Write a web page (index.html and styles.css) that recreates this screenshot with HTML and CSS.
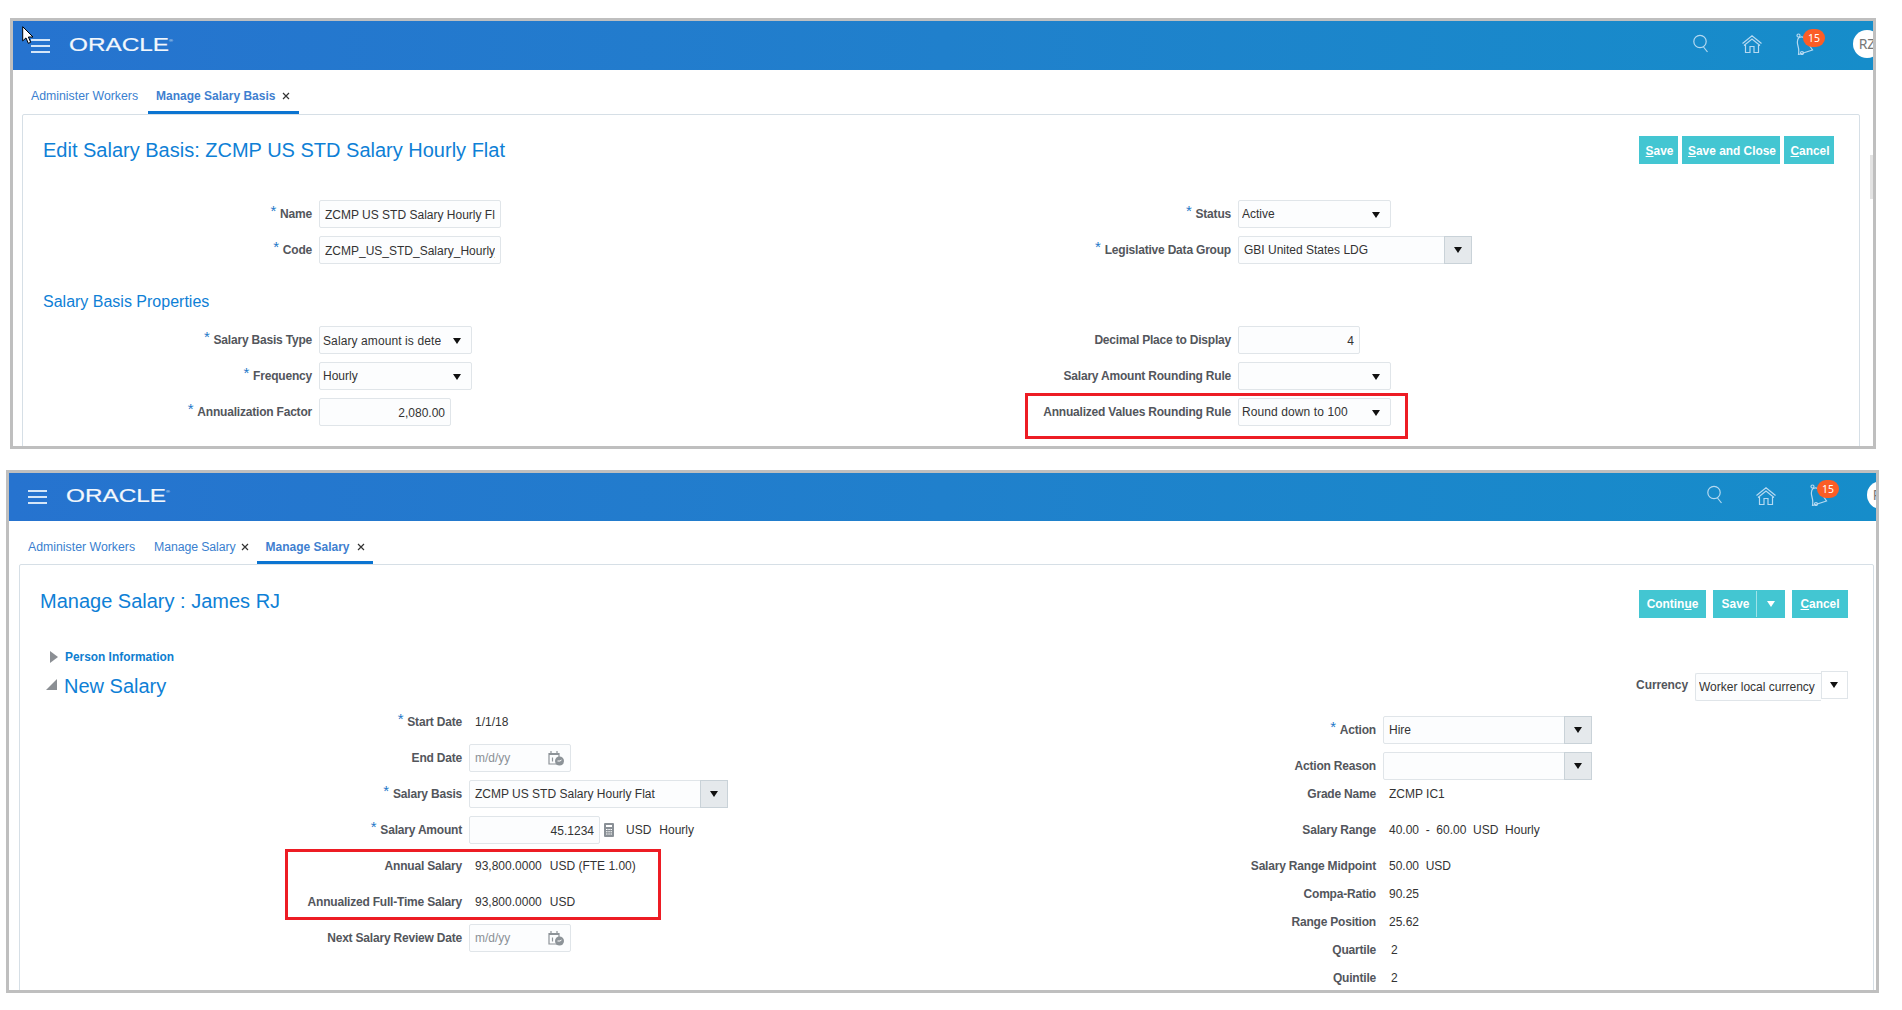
FILE: index.html
```html
<!DOCTYPE html>
<html lang="en">
<head>
<meta charset="utf-8">
<title>Salary screens</title>
<link rel="stylesheet" href="styles.css">
</head>
<body>
<svg class="defs" width="0" height="0" aria-hidden="true">
  <symbol id="i-search" viewBox="0 0 16 20"><circle cx="7" cy="7.500" r="6.200"/><path d="M10.500 13l4 5"/></symbol>
  <symbol id="i-home" viewBox="0 0 20 18"><path d="M.5 8.500L10 .8l9.500 7.700M2 10.500L10 4l8 6.500M3.500 10v7.500h4.500v-6h4v6h4.500V10"/></symbol>
  <symbol id="i-bell" viewBox="0 0 20 22"><path d="M4 4.500c3-1.500 5-.5 6.500 1.500l5 8 2 3-14 4.500c.5-3 .5-5-.5-8.500S1.500 7 4 4.500z"/><circle cx="3.500" cy="2.500" r="1.500"/><circle cx="7" cy="20" r="1.500"/></symbol>
  <symbol id="i-cal" viewBox="0 0 16 16"><path class="cal-line" d="M1 3.500h10v10.500H1zM1 4.500h10M3 1v3M9 1v3M4.500 7.500v4"/><circle class="cal-fill" cx="11.500" cy="11" r="4.500"/><path class="cal-hand" d="M9.500 11h2.500l1.500-1"/></symbol>
  <symbol id="i-x" viewBox="0 0 8 8"><path d="M1 1l6 6M7 1L1 7"/></symbol>
</svg>
<main class="page">

  <section class="window window-a">
    <svg class="cursor" viewBox="0 0 12 18" width="12" height="18"><path d="M.7.7v14.200l3.300-3 2.300 5.400 2.400-1-2.300-5.300h4.600z"/></svg>
    <span class="scroll-thumb"></span>
    <header class="bar">
      <span class="burger"><i></i><i></i><i></i></span>
      <span class="logo"><span class="logo-word">ORACLE<sup>®</sup></span></span>
      <div class="tools">
        <svg class="tool t-search"><use href="#i-search"/></svg>
        <svg class="tool t-home"><use href="#i-home"/></svg>
        <span class="bell"><svg class="tool t-bell"><use href="#i-bell"/></svg><b class="badge">15</b></span>
        <span class="avatar">RZ</span>
      </div>
    </header>
    <nav class="tabs">
      <span class="tab">Administer Workers</span>
      <span class="tab tab-active">Manage Salary Basis<svg class="x"><use href="#i-x"/></svg></span>
    </nav>
    <div class="panel">
      <div class="head">
        <h1 class="title">Edit Salary Basis: ZCMP US STD Salary Hourly Flat</h1>
        <div class="actions">
          <button class="btn w-save"><u>S</u>ave</button>
          <button class="btn w-close"><u>S</u>ave and Close</button>
          <button class="btn w-cancel"><u>C</u>ancel</button>
        </div>
      </div>
      <div class="cols cols-a">
        <div>
          <div class="row"><label class="lbl"><em>*</em>Name</label><div class="inp w182"><input class="field field-long" value="ZCMP US STD Salary Hourly Flat"></div></div>
          <div class="row"><label class="lbl"><em>*</em>Code</label><div class="inp w182"><input class="field field-long" value="ZCMP_US_STD_Salary_Hourly_Flat"></div></div>
        </div>
        <div>
          <div class="row"><label class="lbl"><em>*</em>Status</label><div class="sel w153"><span class="clip">Active</span><i class="tri"></i></div></div>
          <div class="row"><label class="lbl"><em>*</em>Legislative Data Group</label><div class="combo w234"><span class="clip">GBI United States LDG</span><span class="combo-btn"><i class="tri"></i></span></div></div>
        </div>
      </div>
      <h2 class="section">Salary Basis Properties</h2>
      <div class="cols cols-a">
        <div>
          <div class="row"><label class="lbl"><em>*</em>Salary Basis Type</label><div class="sel w153"><input class="field field-sel spaced" value="Salary amount is determined"><i class="tri"></i></div></div>
          <div class="row"><label class="lbl"><em>*</em>Frequency</label><div class="sel w153"><span class="clip">Hourly</span><i class="tri"></i></div></div>
          <div class="row"><label class="lbl"><em>*</em>Annualization Factor</label><div class="inp num w132">2,080.00</div></div>
        </div>
        <div>
          <div class="row"><label class="lbl">Decimal Place to Display</label><div class="inp num w122">4</div></div>
          <div class="row"><label class="lbl">Salary Amount Rounding Rule</label><div class="sel w153"><i class="tri"></i></div></div>
          <div class="row mark-host"><span class="mark mark-a"></span><label class="lbl">Annualized Values Rounding Rule</label><div class="sel w153"><span class="clip spaced">Round down to 100</span><i class="tri"></i></div></div>
        </div>
      </div>
    </div>
  </section>

  <section class="window window-b">
    <header class="bar">
      <span class="burger"><i></i><i></i><i></i></span>
      <span class="logo"><span class="logo-word">ORACLE<sup>®</sup></span></span>
      <div class="tools">
        <svg class="tool t-search"><use href="#i-search"/></svg>
        <svg class="tool t-home"><use href="#i-home"/></svg>
        <span class="bell"><svg class="tool t-bell"><use href="#i-bell"/></svg><b class="badge">15</b></span>
        <span class="avatar">RZ</span>
      </div>
    </header>
    <nav class="tabs">
      <span class="tab">Administer Workers</span>
      <span class="tab tab-plain">Manage Salary<svg class="x"><use href="#i-x"/></svg></span>
      <span class="tab tab-active">Manage Salary<svg class="x"><use href="#i-x"/></svg></span>
    </nav>
    <div class="panel">
      <div class="head">
        <h1 class="title">Manage Salary : James RJ</h1>
        <div class="actions">
          <button class="btn w-cont">Contin<u>u</u>e</button>
          <button class="btn w-split"><span class="split-l">Save</span><span class="split-r"><i class="tri tri-w"></i></span></button>
          <button class="btn w-cancel2"><u>C</u>ancel</button>
        </div>
      </div>
      <div class="disclose"><i class="tw-right"></i><a class="person">Person Information</a></div>
      <div class="subhead">
        <i class="tw-down"></i><h2 class="new">New Salary</h2>
        <div class="currency"><label class="lbl-plain">Currency</label><div class="cur-sel"><span class="clip">Worker local currency</span></div><span class="cur-btn"><i class="tri"></i></span></div>
      </div>
      <div class="cols cols-b">
        <div>
          <div class="row"><label class="lbl"><em>*</em>Start Date</label><span class="val">1/1/18</span></div>
          <div class="row"><label class="lbl">End Date</label><div class="inp date w102"><span class="ph">m/d/yy</span><svg class="cal"><use href="#i-cal"/></svg></div></div>
          <div class="row"><label class="lbl"><em>*</em>Salary Basis</label><div class="combo w259"><span class="clip">ZCMP US STD Salary Hourly Flat</span><span class="combo-btn"><i class="tri"></i></span></div></div>
          <div class="row"><label class="lbl"><em>*</em>Salary Amount</label><div class="inp num w131">45.1234</div>
            <svg class="calc" viewBox="0 0 10 14" width="10" height="14"><rect width="10" height="14" rx="1"/><path d="M2 2h6v2H2zM2 6h1.500v1H2zM4.300 6h1.500v1H4.300zM6.500 6H8v1H6.500zM2 8.200h1.500v1H2zM4.300 8.200h1.500v1H4.300zM6.500 8.200H8v1H6.500zM2 10.500h1.500v1H2zM4.300 10.500h1.500v1H4.300zM6.500 10.500H8v1H6.500z"/></svg>
            <span class="val val-unit">USD</span><span class="val val-hourly">Hourly</span></div>
          <div class="mark-group">
            <span class="mark mark-b"></span>
            <div class="row"><label class="lbl">Annual Salary</label><span class="val">93,800.0000</span><span class="val val-usd">USD (FTE 1.00)</span></div>
            <div class="row"><label class="lbl">Annualized Full-Time Salary</label><span class="val">93,800.0000</span><span class="val val-usd">USD</span></div>
          </div>
          <div class="row"><label class="lbl">Next Salary Review Date</label><div class="inp date w102"><span class="ph">m/d/yy</span><svg class="cal"><use href="#i-cal"/></svg></div></div>
        </div>
        <div class="col-right">
          <div class="row"><label class="lbl"><em>*</em>Action</label><div class="combo w209"><span class="clip">Hire</span><span class="combo-btn"><i class="tri"></i></span></div></div>
          <div class="row tight"><label class="lbl">Action Reason</label><div class="combo w209"><span class="clip"></span><span class="combo-btn"><i class="tri"></i></span></div></div>
          <div class="row"><label class="lbl">Grade Name</label><span class="val">ZCMP IC1</span></div>
          <div class="row"><label class="lbl">Salary Range</label><span class="val">40.00&nbsp; - &nbsp;60.00&nbsp; USD&nbsp; Hourly</span></div>
          <div class="row tight"><label class="lbl">Salary Range Midpoint</label><span class="val">50.00&nbsp; USD</span></div>
          <div class="row tight"><label class="lbl">Compa-Ratio</label><span class="val">90.25</span></div>
          <div class="row tight"><label class="lbl">Range Position</label><span class="val">25.62</span></div>
          <div class="row tight"><label class="lbl">Quartile</label><span class="val val-n">2</span></div>
          <div class="row tight"><label class="lbl">Quintile</label><span class="val val-n">2</span></div>
        </div>
      </div>
    </div>
  </section>
</main>
</body>
</html>
```
FILE: styles.css
```css
* { box-sizing: border-box; }
html, body { margin: 0; padding: 0; background: #fff; }
body { font-family: "Liberation Sans", Arial, sans-serif; font-size: 12px; color: #333; overflow: hidden; height: 1010px; }
.defs { position: absolute; }
.page { padding-top: 18px; }

.window { position: relative; border: 3px solid #bfbfbf; background: #fff; overflow: hidden; }
.window-a { margin-left: 10px; width: 1866px; height: 431px; }
.window-b { margin-left: 6px; margin-top: 21px; width: 1873px; height: 523px; }

.cursor { position: absolute; left: 9px; top: 5px; z-index: 5; }
.cursor path { fill: #fff; stroke: #000; stroke-width: 1; }
.scroll-thumb { position: absolute; right: 0; top: 134px; width: 3px; height: 44px; background: #e3e3e3; z-index: 3; }

.bar { display: flex; align-items: center; background: linear-gradient(90deg, #2673cf 0%, #2080cc 50%, #168dca 100%); }
.window-a .bar { height: 49px; padding-left: 18px; }
.window-b .bar { height: 48px; padding-left: 19px; }
.burger { display: flex; flex-direction: column; gap: 4px; width: 19px; margin-right: 19px; }
.burger i { display: block; height: 2px; background: #d5e6f8; }
.logo { display: block; width: 104px; height: 20px; margin-top: -2px; color: #f2f7fc; }
.logo-word { display: inline-block; font-size: 19px; line-height: 20px; -webkit-text-stroke: 0.2px #f2f7fc; transform: scaleX(1.28); transform-origin: left center; white-space: nowrap; }
.logo sup { font-size: 4px; vertical-align: 9px; line-height: 0; -webkit-text-stroke: 0; }

.tools { margin-left: auto; display: flex; align-items: center; }
.tool { display: block; fill: none; stroke: #b5d9f1; stroke-width: 1.200; }
.t-search { width: 16px; height: 20px; }
.t-home { width: 20px; height: 18px; margin-left: 33px; margin-top: 1px; }
.bell { position: relative; display: block; width: 20px; height: 22px; margin-left: 33px; }
.t-bell { width: 20px; height: 22px; }
.badge { position: absolute; left: 8px; top: -4px; width: 22px; height: 18px; border-radius: 9px; background: #fb5d26; color: #fff; font: 400 10.500px/18px "Noto Sans", sans-serif; text-align: center; }
.avatar { display: block; flex: none; width: 28px; height: 28px; border-radius: 50%; background: #fff; color: #777; font: 14px/28px "Noto Sans", sans-serif; text-align: center; margin-left: 38px; }
.window-a .tools { margin-right: -8px; margin-top: -4px; }
.window-b .tools { margin-right: -19px; margin-top: -4px; }

.tabs { display: flex; align-items: flex-end; font-size: 12.300px; color: #3a7fcf; }
.window-a .tabs { height: 44px; padding-left: 18px; }
.window-b .tabs { height: 43px; padding-left: 19px; }
.tab { display: flex; align-items: center; height: 32px; padding-bottom: 3px; white-space: nowrap; }
.window-a .tab { padding-bottom: 5px; }
.tab-plain { margin-left: 19px; letter-spacing: -0.1px; }
.tab-plain .x { margin-left: 6px; }
.tab-active { padding: 0 9px; border-bottom: 3px solid #0b74d1; font-size: 12px; font-weight: 700; color: #3f7fd0; }
.window-a .tab-active { margin-left: 10px; padding: 0 9px 2px 8px; }
.window-b .tab-active { margin-left: 8px; padding: 0 8px; }
.x { width: 8px; height: 8px; margin-left: 7px; fill: none; stroke: #333; stroke-width: 1.200; }

.panel { border: 1px solid #d6dfe6; border-radius: 2px; height: 600px; }
.window-a .panel { margin: 0 13px 0 9px; }
.window-b .panel { margin: 0 2px 0 10px; }
.head { display: flex; align-items: center; justify-content: space-between; height: 28px; }
.window-a .head { margin-top: 21px; padding: 0 25px 0 20px; }
.window-b .head { margin-top: 25px; padding: 0 25px 0 20px; }
.title { margin: 0; font-size: 20px; font-weight: 400; color: #0e80d6; white-space: nowrap; }
.window-b .title { margin-bottom: 5px; }
.actions { display: flex; }
.btn { display: block; height: 28px; border: 0; padding: 0; background: #43c6d2; color: #fff; font: 700 11.900px "Liberation Sans", Arial, sans-serif; }
.window-a .btn { padding: 2px 0 0 2px; }
.w-save { width: 39px; margin-right: 4px; }
.w-close { width: 98px; margin-right: 4px; }
.w-cancel { width: 50px; }
.w-cont { width: 67px; margin-right: 7px; }
.w-split { width: 72px; margin-right: 7px; display: flex; align-items: stretch; }
.split-l { width: 44px; line-height: 26px; padding-left: 2px; border-right: 1px solid #9fe3e9; margin: 1px 0; }
.split-r { flex: 1; display: flex; align-items: center; justify-content: center; }
.w-cancel2 { width: 56px; }

.cols { display: grid; align-items: start; }
.cols-a { grid-template-columns: 723px 1fr; }
.cols-b { grid-template-columns: 801px 1fr; margin-top: 7px; }
.cols-a > div:first-child .lbl { width: 289px; }
.cols-a > div:last-child .lbl { width: 485px; }
.cols-b > div:first-child .lbl { width: 442px; }
.cols-b > div:last-child .lbl { width: 555px; }
.window-a .head + .cols { margin-top: 36px; }

.row { position: relative; display: flex; align-items: center; height: 28px; margin-bottom: 8px; }
.row.tight { margin-bottom: 0; }
.col-right { padding-top: 8px; }
.lbl { flex: none; margin-right: 7px; padding-bottom: 1px; text-align: right; font-size: 12px; letter-spacing: -0.2px; font-weight: 700; color: #53565c; white-space: nowrap; }
.lbl em { font-style: normal; font-size: 15px; line-height: 0; color: #2478c8; font-weight: 400; margin-right: 4px; position: relative; top: -2px; }
.inp, .sel, .combo { position: relative; flex: none; height: 28px; line-height: 26px; background: #fcfdfe; border: 1px solid #e0e5e9; border-radius: 2px; color: #333; white-space: nowrap; }
.inp { padding: 0 5px; }
.sel { padding-left: 3px; }
.clip { display: block; overflow: hidden; white-space: nowrap; }
.spaced { letter-spacing: 0.1px; }
.field { display: block; height: 26px; padding: 1px 0 0; border: 0; outline: 0; background: transparent; color: #333; font: inherit; }
.field-long { width: 170px; }
.field-sel { width: 118px; }
.num { text-align: right; padding-top: 1px; }
.w102 { width: 102px; } .w122 { width: 122px; } .w131 { width: 131px; } .w132 { width: 132px; } .w153 { width: 153px; } .w182 { width: 182px; } .w209 { width: 209px; } .w234 { width: 234px; } .w259 { width: 259px; }
.tri { display: block; width: 0; height: 0; border-style: solid; border-width: 6px 4.500px 0; border-color: #111 transparent transparent; }
.tri-w { border-color: #fff transparent transparent; margin-top: -1px; }
.sel .tri { position: absolute; right: 10px; top: 11px; }
.combo { display: flex; }
.combo .clip { flex: 1; padding-left: 5px; }
.combo-btn { flex: none; width: 28px; margin: -1px -1px -1px 0; background: #e5e9ec; border: 1px solid #c9d2d8; display: flex; align-items: center; justify-content: center; }

.section { margin: 0; padding: 18px 0 12px 20px; font-size: 16px; line-height: 24px; font-weight: 400; color: #0e80d6; }

.disclose { display: flex; align-items: center; height: 24px; margin-top: 27px; padding-left: 30px; }
.tw-right { display: block; width: 0; height: 0; border-style: solid; border-width: 6.500px 0 6.500px 8px; border-color: transparent transparent transparent #8b8f94; margin-right: 7px; }
.person { font-weight: 700; color: #0e7ed0; font-size: 11.900px; }
.subhead { display: flex; align-items: center; height: 30px; margin-top: 2px; padding: 0 25px 0 26px; }
.tw-down { display: block; width: 0; height: 0; border-style: solid; border-width: 0 0 11px 11px; border-color: transparent transparent #8b8f94; margin: 0 7px 4px 0; }
.new { margin: 0; font-size: 20px; font-weight: 400; color: #0e80d6; }
.currency { margin-left: auto; display: flex; align-items: flex-start; }
.lbl-plain { font-size: 12px; letter-spacing: -0.1px; font-weight: 700; color: #53565c; margin-right: 7px; line-height: 29px; }
.cur-sel { width: 126px; height: 28px; margin-top: 2px; border: 1px solid #e0e5e9; border-right: 0; border-radius: 2px 0 0 2px; background: #fcfdfe; line-height: 26px; padding-left: 3px; color: #333; }
.cur-btn { width: 27px; height: 28px; padding-right: 2px; border: 1px solid #e0e5e9; background: #fff; display: flex; align-items: center; justify-content: center; }

.val { flex: none; margin-left: 6px; color: #333; white-space: nowrap; }
.val-n { margin-left: 8px; }
.val-usd { margin-left: 8px; }
.val-unit { margin-left: 12px; }
.val-hourly { margin-left: 8px; }
.ph { color: #8a9096; }
.date { padding-left: 5px; }
.cal { position: absolute; right: 6px; top: 5px; width: 16px; height: 16px; }
.cal-line { fill: none; stroke: #8d9398; stroke-width: 1.200; }
.cal-fill { fill: #8d9398; }
.cal-hand { fill: none; stroke: #fff; stroke-width: 1; }
.calc { flex: none; margin-left: 4px; }
.calc rect { fill: #8a9096; }
.calc path { fill: #fff; }

.mark-group { position: relative; }
.mark { position: absolute; border: 3px solid #ed1c24; z-index: 2; pointer-events: none; }
.mark-a { left: 279px; top: -5px; width: 383px; height: 46px; }
.mark-b { left: 265px; top: -3px; width: 376px; height: 71px; }
```
